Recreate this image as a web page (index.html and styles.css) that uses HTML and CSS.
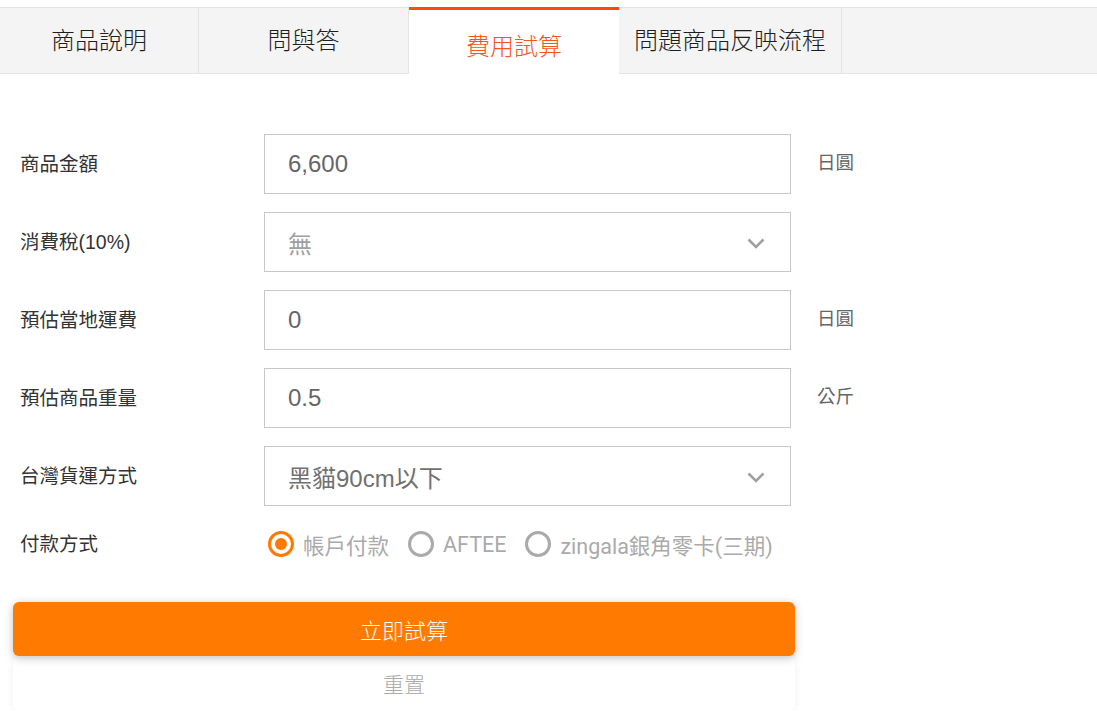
FILE: index.html
```html
<!DOCTYPE html>
<html lang="zh-Hant">
<head>
<meta charset="utf-8">
<link rel="stylesheet" href="styles.css">
</head>
<body>
<nav class="tabs">
  <div class="tab t1">商品說明</div>
  <div class="tab t2">問與答</div>
  <div class="tab t3 active">費用試算</div>
  <div class="tab t4">問題商品反映流程</div>
  <div class="tab-rest"></div>
</nav>
<main class="calc">
  <div class="row">
    <label class="label">商品金額</label>
    <div class="field">6,600</div>
    <span class="unit">日圓</span>
  </div>
  <div class="row">
    <label class="label">消費稅(10%)</label>
    <div class="field select muted">無<svg class="chev" width="18" height="11" viewBox="0 0 18 11"><path d="M1.5 1.5 L9 9 L16.5 1.5" fill="none" stroke="#a0a0a0" stroke-width="2.6"/></svg></div>
  </div>
  <div class="row">
    <label class="label">預估當地運費</label>
    <div class="field">0</div>
    <span class="unit">日圓</span>
  </div>
  <div class="row">
    <label class="label">預估商品重量</label>
    <div class="field">0.5</div>
    <span class="unit">公斤</span>
  </div>
  <div class="row">
    <label class="label">台灣貨運方式</label>
    <div class="field select">黑貓90cm以下<svg class="chev" width="18" height="11" viewBox="0 0 18 11"><path d="M1.5 1.5 L9 9 L16.5 1.5" fill="none" stroke="#a0a0a0" stroke-width="2.6"/></svg></div>
  </div>
  <div class="row radio-row">
    <label class="label">付款方式</label>
    <div class="radios">
      <span class="radio checked"><span class="dot"></span>帳戶付款</span>
      <span class="radio"><span class="dot"></span>AFTEE</span>
      <span class="radio"><span class="dot"></span>zingala銀角零卡(三期)</span>
    </div>
  </div>
  <div class="actions">
    <button class="btn-primary">立即試算</button>
    <button class="btn-reset">重置</button>
  </div>
</main>
</body>
</html>
```

FILE: styles.css
```css
* { box-sizing: border-box; }
html, body { margin: 0; padding: 0; background: #fff; }
body {
  font-family: "Liberation Sans", "Noto Sans CJK TC", sans-serif;
  color: #333;
  overflow: hidden;
}
.tabs {
  display: flex;
  margin-top: 7px;
  height: 67px;
  border-top: 1px solid #e4e4e4;
  border-bottom: 1px solid #e4e4e4;
  background: #f4f4f4;
}
.tab {
  display: flex;
  align-items: center;
  justify-content: center;
  font-family: "Noto Sans CJK TC", sans-serif;
  font-weight: 300;
  font-size: 24px;
  color: #1e1e1e;
  border-right: 1px solid #e4e4e4;
  height: 66px;
  padding-bottom: 5px;
}
.t1 { width: 199px; }
.t2 { width: 210px; }
.t3 { width: 209px; }
.t4 { width: 223px; }
.tab.active {
  background: #fff;
  color: #f5541c;
  border-top: 3px solid #ff4a0a;
  margin-top: -1px;
  height: 69px;
  padding-top: 2px;
  padding-bottom: 0;
  border-right: none;
  width: 210px;
  position: relative;
  z-index: 1;
}
.tab-rest { flex: 1; }
.calc {
  padding: 60px 0 0 0;
}
.row {
  display: flex;
  align-items: center;
  height: 60px;
  margin-bottom: 18px;
}
.label {
  width: 264px;
  padding-left: 20px;
  padding-bottom: 4px;
  font-size: 19.5px;
  color: #333;
  font-family: "Liberation Sans", "Noto Sans CJK TC", sans-serif;
}
.field {
  width: 527px;
  height: 60px;
  border: 1px solid #c8c8c8;
  display: flex;
  align-items: center;
  padding-left: 23px;
  padding-right: 25px;
  font-size: 24px;
  color: #666;
  font-family: "Liberation Sans", "Noto Sans CJK TC", sans-serif;
}
.field.select { justify-content: space-between; color: #707070; }
.field.muted { color: #a0a0a0; }
.chev { margin-top: 2px; }
.unit {
  margin-left: 26px;
  padding-bottom: 6px;
  font-size: 18.5px;
  color: #666;
  font-family: "Noto Sans CJK TC", sans-serif;
}
.radio-row { height: 34px; margin-top: 21px; margin-bottom: 0; }
.radios {
  display: flex;
  align-items: center;
  padding-left: 4px;
  gap: 19px;
}
.radio {
  display: flex;
  align-items: center;
  font-family: Roboto, "Noto Sans CJK TC", sans-serif;
  font-size: 21.5px;
  color: #aaa;
}
.dot {
  width: 26px;
  height: 26px;
  border: 3px solid #aaa;
  border-radius: 50%;
  margin-right: 9px;
  display: inline-flex;
  align-items: center;
  justify-content: center;
}
.radio.checked .dot { border-color: #ff7a00; }
.radio.checked .dot::after {
  content: "";
  width: 12px;
  height: 12px;
  border-radius: 50%;
  background: #ff7a00;
}
.actions {
  margin-top: 41px;
  margin-left: 13px;
  width: 782px;
  display: flex;
  flex-direction: column;
}
.actions button {
  border: 0;
  font-family: "Noto Sans CJK TC", sans-serif;
  font-weight: 300;
  cursor: pointer;
}
.btn-primary {
  height: 54px;
  font-size: 22px;
  background: #ff7a00;
  color: #fff;
  border-radius: 6px;
  box-shadow: 0 2px 8px rgba(0,0,0,0.25);
  position: relative;
  z-index: 1;
}
.btn-reset {
  height: 54px;
  font-size: 21px;
  background: #fff;
  color: #aaa;
  border-radius: 6px;
  box-shadow: 0 2px 8px rgba(0,0,0,0.06);
}
```
